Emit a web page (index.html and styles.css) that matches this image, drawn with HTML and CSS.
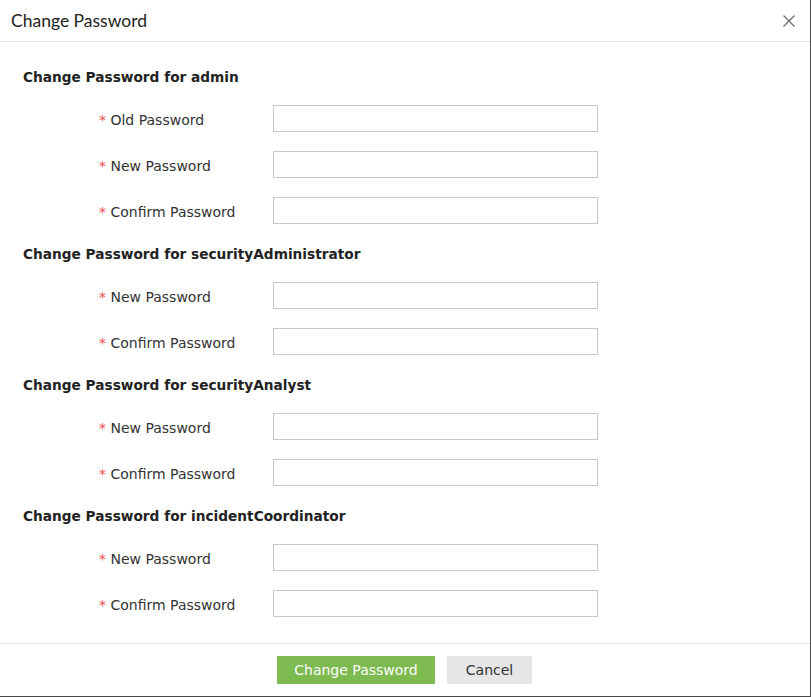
FILE: index.html
```html
<!DOCTYPE html>
<html>
<head>
<meta charset="utf-8">
<link rel="stylesheet" href="styles.css">
</head>
<body>
<div class="dialog">
  <div class="header">
    <span class="title">Change Password</span>
    <span class="close" aria-label="Close">
      <svg width="14" height="14" viewBox="0 0 14 14"><path d="M1.5 1.5 L12.5 12.5 M12.5 1.5 L1.5 12.5" stroke="#707070" stroke-width="1.4" fill="none"/></svg>
    </span>
  </div>
  <div class="body">
    <div class="heading">Change Password for admin</div>
    <div class="row"><label class="label"><span class="req">*</span> Old Password</label><input class="field" type="password"></div>
    <div class="row"><label class="label"><span class="req">*</span> New Password</label><input class="field" type="password"></div>
    <div class="row"><label class="label"><span class="req">*</span> Confirm Password</label><input class="field" type="password"></div>

    <div class="heading">Change Password for securityAdministrator</div>
    <div class="row"><label class="label"><span class="req">*</span> New Password</label><input class="field" type="password"></div>
    <div class="row"><label class="label"><span class="req">*</span> Confirm Password</label><input class="field" type="password"></div>

    <div class="heading">Change Password for securityAnalyst</div>
    <div class="row"><label class="label"><span class="req">*</span> New Password</label><input class="field" type="password"></div>
    <div class="row"><label class="label"><span class="req">*</span> Confirm Password</label><input class="field" type="password"></div>

    <div class="heading">Change Password for incidentCoordinator</div>
    <div class="row"><label class="label"><span class="req">*</span> New Password</label><input class="field" type="password"></div>
    <div class="row"><label class="label"><span class="req">*</span> Confirm Password</label><input class="field" type="password"></div>
  </div>
  <div class="footer">
    <button class="btn btn-primary">Change Password</button>
    <button class="btn btn-cancel">Cancel</button>
  </div>
</div>
</body>
</html>
```
FILE: styles.css
```css
html, body {
  margin: 0;
  padding: 0;
  background: #fff;
}
.dialog {
  width: 811px;
  height: 697px;
  box-sizing: border-box;
  border-right: 1px solid #4a4a4a;
  border-bottom: 1px solid #4a4a4a;
  display: flex;
  flex-direction: column;
  font-family: "DejaVu Sans", Verdana, sans-serif;
  font-size: 14px;
  color: #333;
}
.header {
  height: 41px;
  border-bottom: 1px solid #e3e3e3;
  display: flex;
  align-items: center;
  justify-content: space-between;
  padding: 0 14px 0 11px;
  flex-shrink: 0;
}
.title {
  font-family: Lato, "Open Sans", sans-serif;
  font-size: 17.5px;
  color: #222;
  margin-top: -1px;
}
.close {
  display: flex;
  margin-top: 1px;
}
.body {
  flex: 1;
  display: flex;
  flex-direction: column;
  gap: 19px;
  padding: 24px 0 0 23px;
}
.heading {
  height: 20px;
  line-height: 22px;
  font-weight: bold;
  color: #222;
  font-size: 13.7px;
}
.row {
  display: flex;
  align-items: center;
  height: 27px;
  padding-left: 76px;
}
.label {
  width: 174px;
  color: #333;
  padding-top: 2px;
}
.req {
  color: #f04848;
}
.field {
  width: 325px;
  height: 27px;
  box-sizing: border-box;
  border: 1px solid #c8c8c8;
  margin: 0;
  padding: 0 6px;
  outline: none;
}
.footer {
  height: 52px;
  border-top: 1px solid #e3e3e3;
  display: flex;
  align-items: center;
  justify-content: center;
  gap: 12px;
  flex-shrink: 0;
  padding-right: 1px;
}
.btn {
  height: 28px;
  border: none;
  margin: 0;
  font-family: "DejaVu Sans", Verdana, sans-serif;
  font-size: 14px;
  padding: 0;
  cursor: pointer;
}
.btn-primary {
  width: 158px;
  background: #7dba50;
  color: #fff;
}
.btn-cancel {
  width: 85px;
  background: #e6e6e6;
  color: #333;
}
```
